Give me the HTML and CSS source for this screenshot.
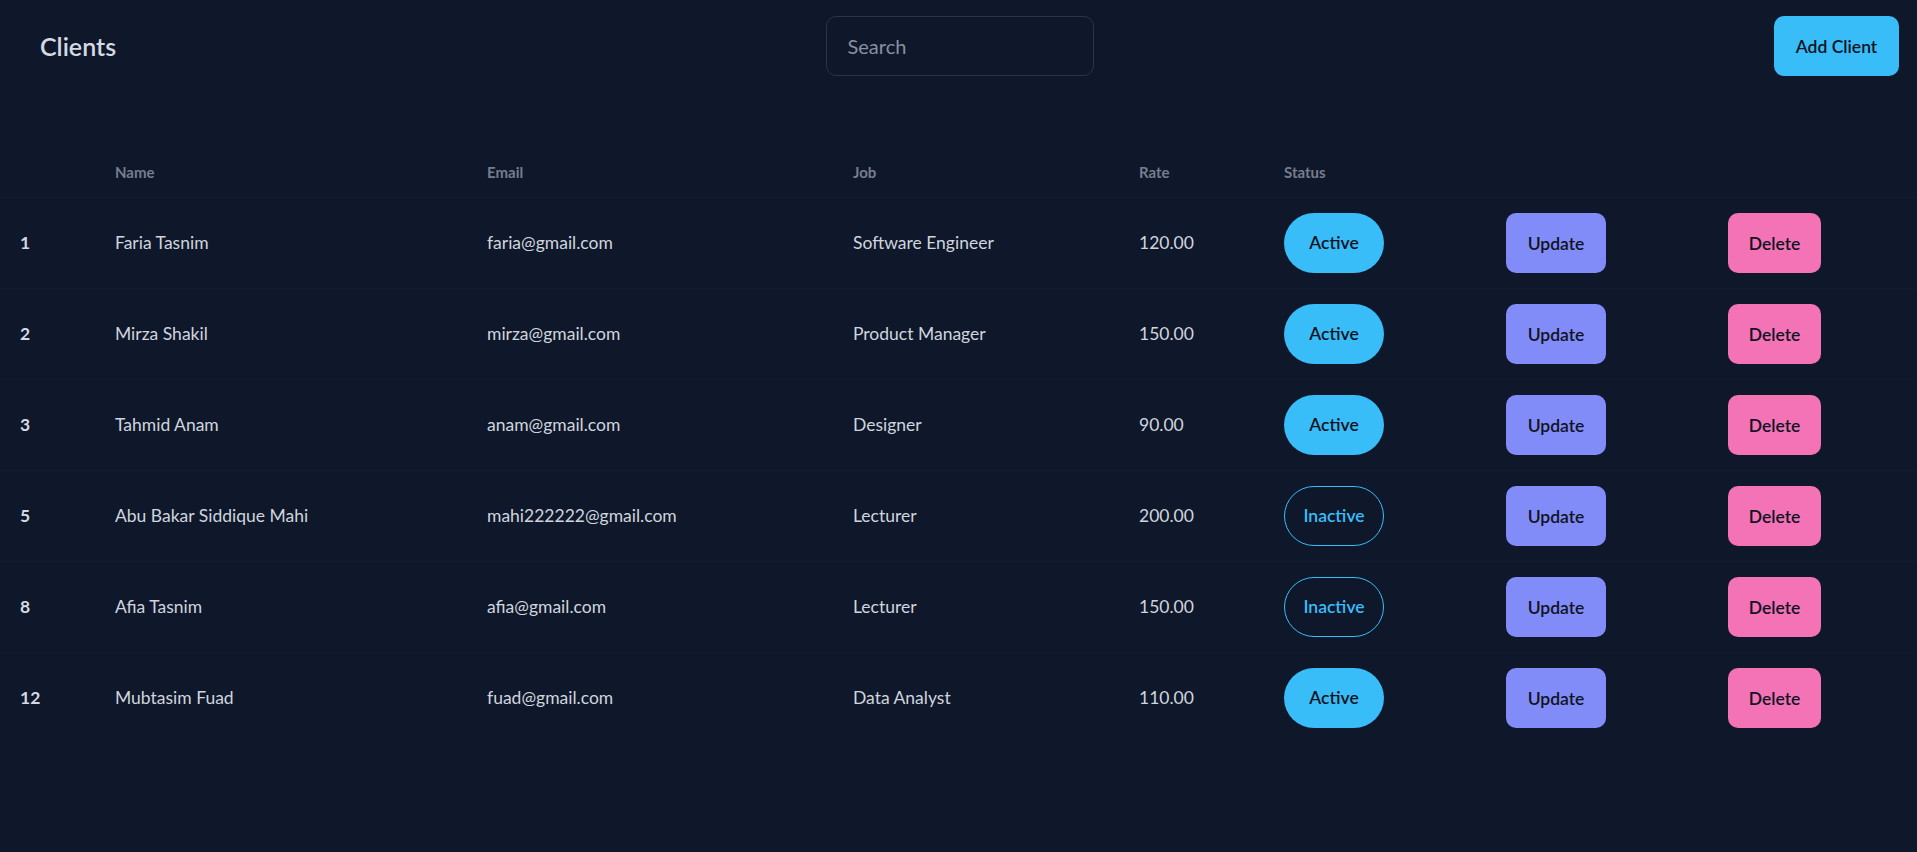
FILE: index.html
```html
<!DOCTYPE html>
<html lang="en">
<head>
<meta charset="utf-8">
<title>Clients</title>
<link rel="stylesheet" href="styles.css">
</head>
<body>
<header class="navbar">
  <div class="navbar-start"><span class="brand">Clients</span></div>
  <div class="navbar-center"><input class="search" type="text" placeholder="Search"></div>
  <div class="navbar-end"><button class="btn btn-add">Add Client</button></div>
</header>
<main>
  <table class="clients">
    <colgroup>
      <col style="width:95px"><col style="width:372px"><col style="width:366px"><col style="width:286px"><col style="width:145px"><col style="width:222px"><col style="width:222px"><col>
    </colgroup>
    <thead>
      <tr><th></th><th>Name</th><th>Email</th><th>Job</th><th>Rate</th><th>Status</th><th></th><th></th></tr>
    </thead>
    <tbody>
      <tr><td class="id">1</td><td>Faria Tasnim</td><td>faria@gmail.com</td><td>Software Engineer</td><td>120.00</td><td><span class="badge active">Active</span></td><td><button class="btn btn-update">Update</button></td><td><button class="btn btn-delete">Delete</button></td></tr>
      <tr><td class="id">2</td><td>Mirza Shakil</td><td>mirza@gmail.com</td><td>Product Manager</td><td>150.00</td><td><span class="badge active">Active</span></td><td><button class="btn btn-update">Update</button></td><td><button class="btn btn-delete">Delete</button></td></tr>
      <tr><td class="id">3</td><td>Tahmid Anam</td><td>anam@gmail.com</td><td>Designer</td><td>90.00</td><td><span class="badge active">Active</span></td><td><button class="btn btn-update">Update</button></td><td><button class="btn btn-delete">Delete</button></td></tr>
      <tr><td class="id">5</td><td>Abu Bakar Siddique Mahi</td><td>mahi222222@gmail.com</td><td>Lecturer</td><td>200.00</td><td><span class="badge inactive">Inactive</span></td><td><button class="btn btn-update">Update</button></td><td><button class="btn btn-delete">Delete</button></td></tr>
      <tr><td class="id">8</td><td>Afia Tasnim</td><td>afia@gmail.com</td><td>Lecturer</td><td>150.00</td><td><span class="badge inactive">Inactive</span></td><td><button class="btn btn-update">Update</button></td><td><button class="btn btn-delete">Delete</button></td></tr>
      <tr><td class="id">12</td><td>Mubtasim Fuad</td><td>fuad@gmail.com</td><td>Data Analyst</td><td>110.00</td><td><span class="badge active">Active</span></td><td><button class="btn btn-update">Update</button></td><td><button class="btn btn-delete">Delete</button></td></tr>
    </tbody>
  </table>
</main>
</body>
</html>
```

FILE: styles.css
```css
* { box-sizing: border-box; }

html, body {
  margin: 0;
  padding: 0;
  background: #0f172a;
  color: #cfd5de;
  font-family: Lato, "Open Sans", sans-serif;
}

body { min-height: 852px; }

.navbar {
  display: flex;
  align-items: center;
  height: 92px;
  padding: 0 18px 0 20px;
}

.navbar-start, .navbar-end {
  flex: 1 1 0;
  display: flex;
  align-items: center;
}

.navbar-end { justify-content: flex-end; }

.brand {
  padding-left: 20px;
  font-size: 25px;
  font-weight: 600;
  color: #d4dae3;
}

.search {
  width: 268px;
  height: 60px;
  border: 1px solid #2b3446;
  border-radius: 10px;
  background: #0f172a;
  padding: 0 21px;
  font-family: Lato, "Open Sans", sans-serif;
  font-size: 20px;
  color: #cfd5de;
  outline: none;
}

.search::placeholder { color: #8791a2; }

.btn {
  border: none;
  border-radius: 10px;
  height: 60px;
  font-family: Lato, "Open Sans", sans-serif;
  font-size: 17.5px;
  font-weight: 600;
  color: #0f1322;
  padding: 0;
  cursor: pointer;
}

.btn-add { width: 125px; background: #38bdf8; }
.btn-update { width: 100px; background: #818cf8; }
.btn-delete { width: 93px; background: #f472b6; }

main { padding-top: 55px; }

.clients {
  width: 100%;
  table-layout: fixed;
  border-collapse: collapse;
}

.clients th {
  text-align: left;
  font-size: 15px;
  font-weight: 700;
  color: #767e8e;
  line-height: 20px;
  padding: 15px 20px;
}

.clients thead tr { border-bottom: 1px solid #141c2f; }

.clients td {
  padding: 15px 20px;
  font-size: 17.5px;
  line-height: 24px;
  color: #cfd5de;
  vertical-align: middle;
  white-space: nowrap;
}

.clients tbody tr { border-bottom: 1px solid #121a2d; }
.clients tbody tr:last-child { border-bottom: none; }

.clients td.id { font-weight: 700; color: #d4dae3; }

.badge {
  display: flex;
  align-items: center;
  justify-content: center;
  width: 100px;
  height: 60px;
  border-radius: 30px;
  font-size: 17.5px;
  font-weight: 600;
}

.badge.active { background: #38bdf8; color: #0f1322; }
.badge.inactive { border: 1px solid #38bdf8; color: #38bdf8; }
```
